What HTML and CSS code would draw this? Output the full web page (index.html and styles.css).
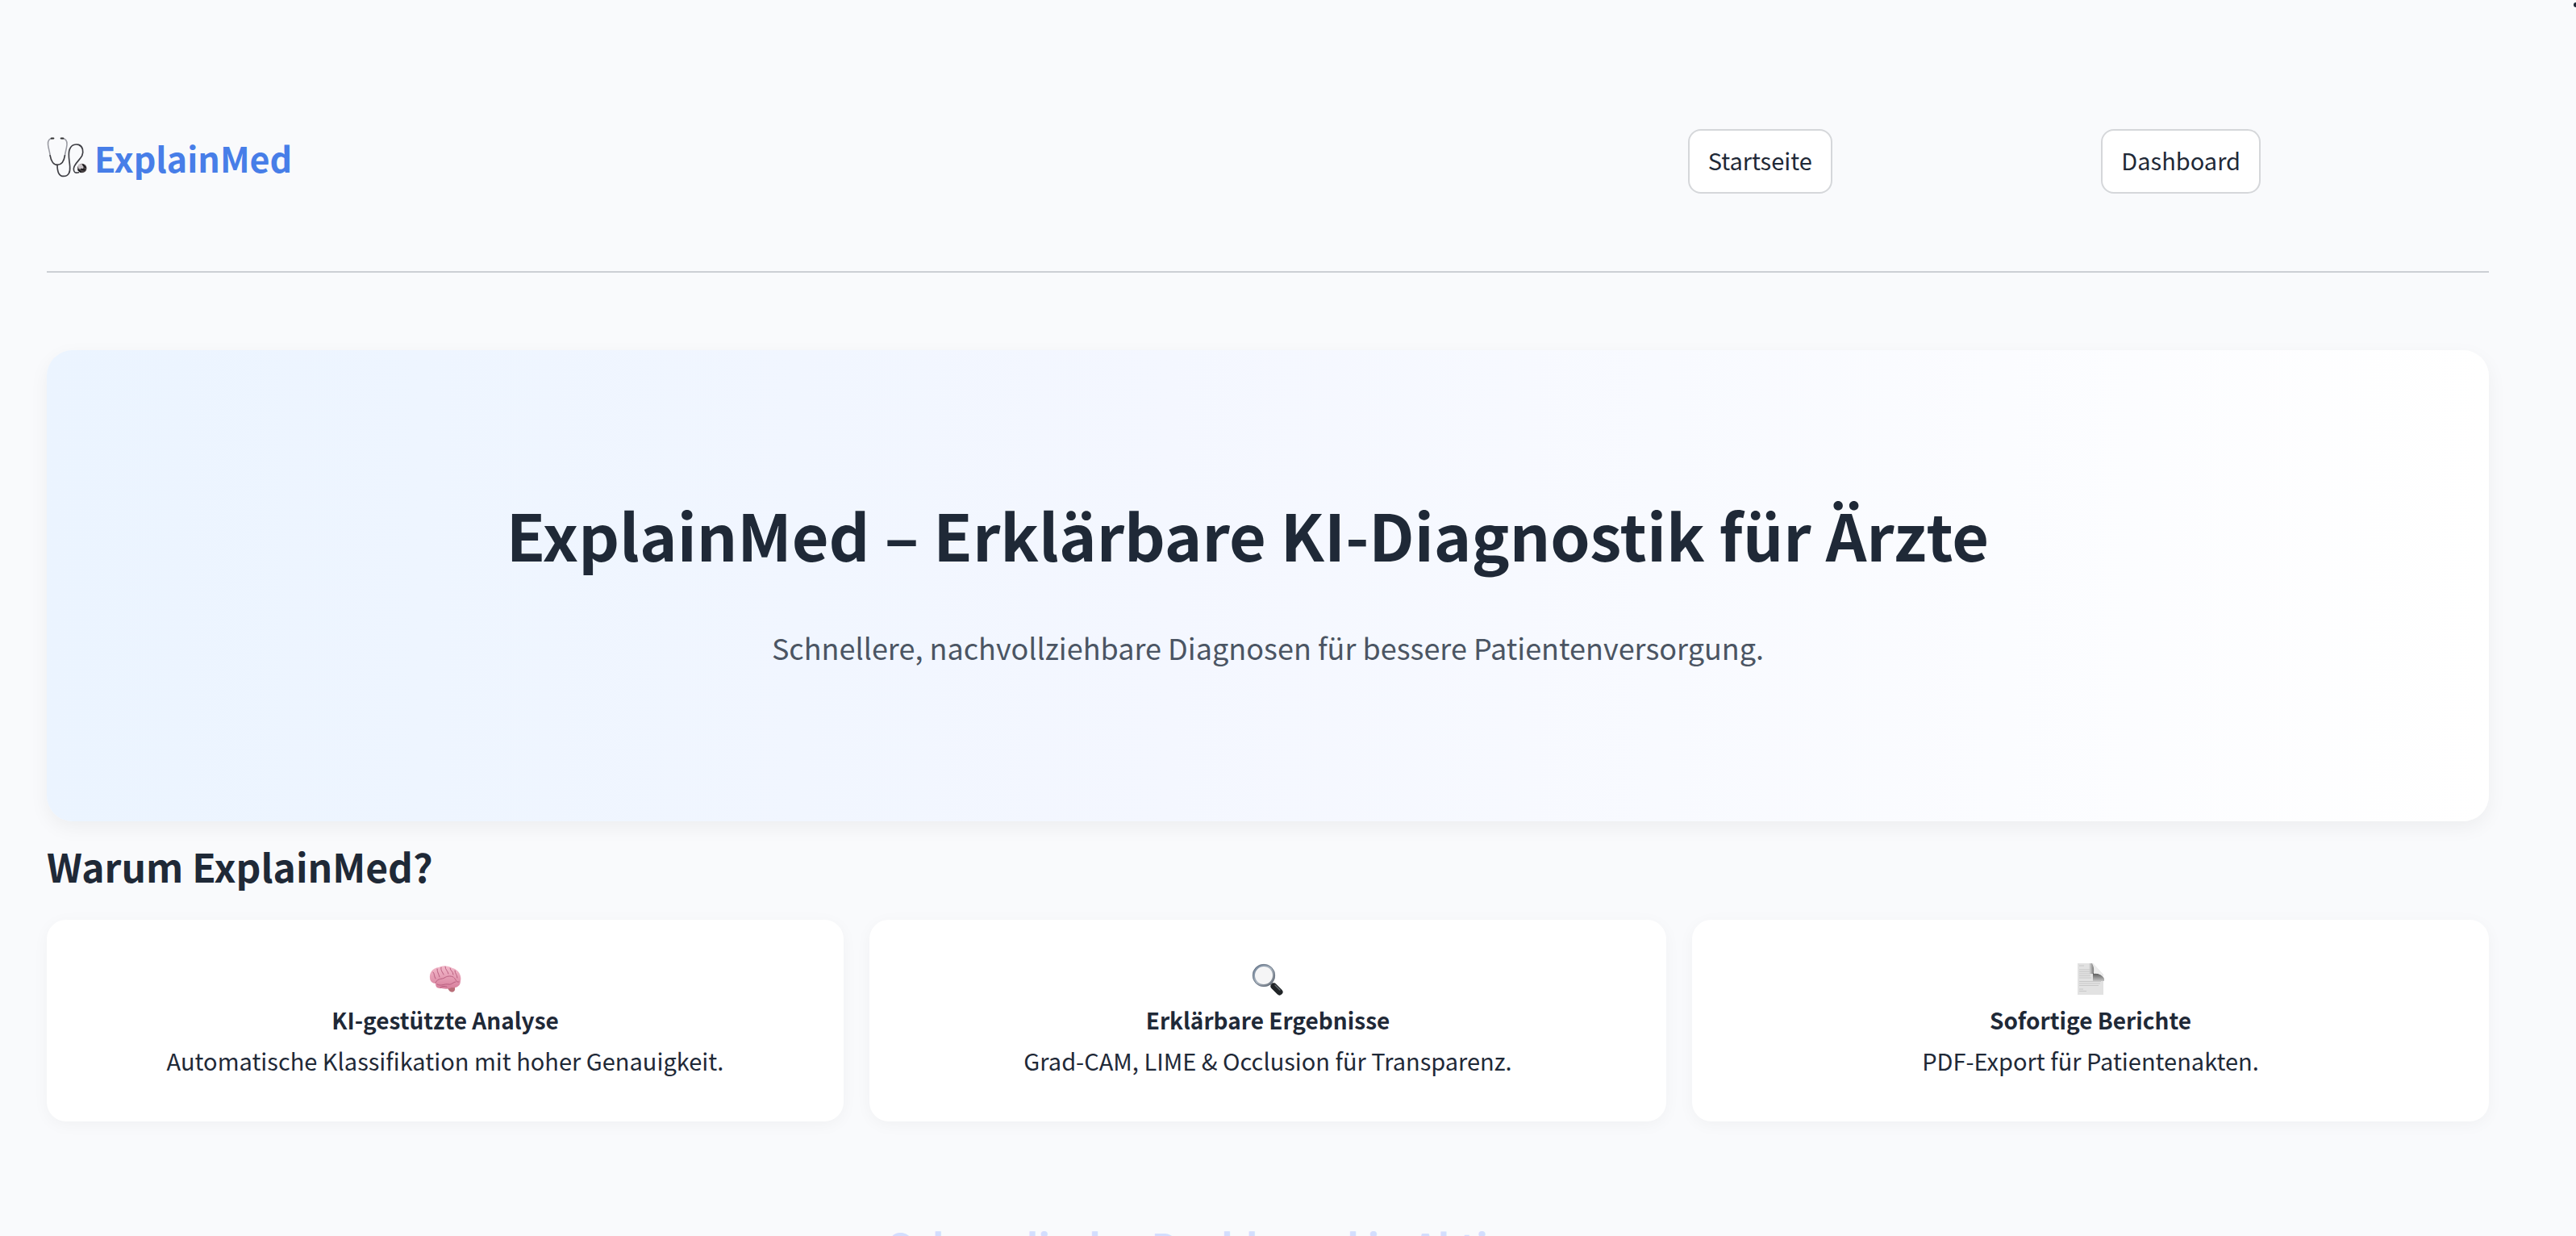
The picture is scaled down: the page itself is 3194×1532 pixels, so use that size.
FILE: index.html
```html
<!DOCTYPE html>
<html lang="de">
<head>
<meta charset="utf-8">
<title>ExplainMed</title>
<meta name="viewport" content="width=device-width, initial-scale=1">
<link rel="stylesheet" href="styles.css">
</head>
<body>
<div class="app">
  <button class="menu" type="button" aria-label="Menü">
    <svg viewBox="0 0 6 30" width="6" height="30"><circle cx="3" cy="3" r="3"/></svg>
  </button>
  <header class="header">
    <div class="brand">
      <svg class="brand-icon" viewBox="0 0 48 48" fill="none" stroke-linecap="round" aria-hidden="true">
        <path d="M7 1.500C3 1.500 1 4 1.500 9C2 14 3.500 17 4 22" stroke="#9a9ba3" stroke-width="1.500"/>
        <path d="M18 1.500C22 1.500 24.500 4 24 9C23.500 14 22 18 21.500 22" stroke="#9a9ba3" stroke-width="1.500"/>
        <path d="M4 22C5 28 8 33 12.500 33S20.500 29 21.500 22" stroke="#3b3b40" stroke-width="1.600"/>
        <path d="M12.500 33C12.500 41 14 46.500 20 46.500C26 46.500 28 42 27.500 35C27 27 25 21 27 15C29 9 34 8 38 9C43 11 44 17 42 22C39 28 32 32 32 38C32 42 34 43 38 42" stroke="#3f3f45" stroke-width="1.600"/>
        <path d="M5.500 1.500H8M17 1.500h2.500" stroke="#333" stroke-width="2"/>
        <circle cx="42" cy="37" r="5.500" fill="#4a4346"/>
        <circle cx="40.500" cy="35" r="3.200" fill="#c9c3c7"/>
        <path d="M37.500 39l3 2.500M43 33l3 3M41 38l4 1" stroke="#17171b" stroke-width="1.500"/>
      </svg>
      <span>ExplainMed</span>
    </div>
    <nav class="nav-item"><button class="nav-button" type="button">Startseite</button></nav>
    <nav class="nav-item"><button class="nav-button" type="button">Dashboard</button></nav>
  </header>
  <hr class="divider">
  <main>
    <section class="hero">
      <h1 class="hero-title">ExplainMed – Erklärbare KI-Diagnostik für Ärzte</h1>
      <p class="hero-text">Schnellere, nachvollziehbare Diagnosen für bessere Patientenversorgung.</p>
    </section>
    <h2 class="section-title">Warum ExplainMed?</h2>
    <section class="cards">
      <article class="card">
        <div class="card-icon">
          <svg viewBox="0 0 40 40" width="40" height="40" aria-hidden="true">
            <defs><linearGradient id="brain" x1="0" y1="0" x2="0" y2="1"><stop offset="0" stop-color="#f3bacb"/><stop offset="1" stop-color="#d77f9c"/></linearGradient></defs>
            <path d="M21 28L25 34C28 37 33 36 32 30L30 26Z" fill="#b96d78"/>
            <path d="M1 18C0 11 6 5 12 5C17 2 25 3 29 6C35 7 41 14 39 22C39 28 34 31 28 30C23 33 17 31 14 31C9 31 8 28 8 25C4 25 1 22 1 18Z" fill="url(#brain)"/>
            <g fill="none" stroke="#b95f80" stroke-width="1" stroke-linecap="round">
              <path d="M5 11c2 2 1 5 3 8M10 7c0 4 2 6 3 10M15 5c-1 4 2 6 3 9M20 4c0 4 3 5 4 9M26 6c0 3 4 4 4 8M32 9c0 4 3 5 3 9"/>
              <path d="M8 24c3-6 8-4 11-6s7-3 11-1M10 26c5 3 9-1 14 0 4 1 6-3 9-3M31 18c3 2 2 6 6 5M14 30c2-2 6-2 8-1"/>
            </g>
          </svg>
        </div>
        <h3 class="card-title">KI-gestützte Analyse</h3>
        <p class="card-text">Automatische Klassifikation mit hoher Genauigkeit.</p>
      </article>
      <article class="card">
        <div class="card-icon">
          <svg viewBox="0 0 40 40" width="40" height="40" aria-hidden="true">
            <defs><linearGradient id="rim" x1="0" y1="0" x2="1" y2="1"><stop offset="0" stop-color="#6f8298"/><stop offset=".5" stop-color="#aab4bf"/><stop offset="1" stop-color="#646c76"/></linearGradient></defs>
            <path d="M24 25l3 3" stroke="#858b93" stroke-width="4"/>
            <circle cx="15" cy="15" r="12.500" fill="#f5f5f6" stroke="url(#rim)" stroke-width="3"/>
            <circle cx="15" cy="15" r="13.700" fill="none" stroke="#5d6978" stroke-width=".700"/>
            <path d="M27.500 28.500L34.500 35.500" stroke="#202427" stroke-width="8" stroke-linecap="round"/>
            <path d="M29 27l6 6" stroke="#626a6f" stroke-width="1.500" stroke-linecap="round"/>
          </svg>
        </div>
        <h3 class="card-title">Erklärbare Ergebnisse</h3>
        <p class="card-text">Grad-CAM, LIME &amp; Occlusion für Transparenz.</p>
      </article>
      <article class="card">
        <div class="card-icon">
          <svg viewBox="0 0 40 40" width="40" height="40" aria-hidden="true">
            <defs><linearGradient id="fold" x1="0" y1="1" x2="0" y2="0"><stop offset="0" stop-color="#c4c4c4"/><stop offset="1" stop-color="#555"/></linearGradient>
            <linearGradient id="side" x1="0" y1="0" x2="1" y2="0"><stop offset="0" stop-color="#e2e2e2"/><stop offset="1" stop-color="#777"/></linearGradient></defs>
            <path d="M4 0H23L36 14V39H4Z" fill="#e2e2e2"/>
            <path d="M18 0H22Q25 5 24 13H18Z" fill="url(#side)"/>
            <path d="M23 12C29 12 34 14 37 19V22H23Z" fill="url(#fold)"/>
            <path d="M22 0C25 2 34 11 37 18C33 13 29 12 24 13C25 7 24 3 22 0Z" fill="#ededed"/>
            <path d="M6 3h6M6 8h13M6 10.500h13M6 13h14M6 15.500h14M6 18h15M6 22.500h27M6 25h26M6 27.500h24M6 32h5M6 34.500h9" stroke="#c8c8c8" stroke-width="1"/>
          </svg>
        </div>
        <h3 class="card-title">Sofortige Berichte</h3>
        <p class="card-text">PDF-Export für Patientenakten.</p>
      </article>
    </section>
    <h2 class="demo-title">Schau dir das Dashboard in Aktion an</h2>
  </main>
</div>
</body>
</html>
```
FILE: styles.css
```css
* { box-sizing: border-box; }

body {
  margin: 0;
  background: #f9fafc;
  color: #1f2937;
  font-family: "Noto Sans CJK SC", "Noto Sans", sans-serif;
  font-size: 29px;
  line-height: 50px;
}

h1, h2, h3, p { margin: 0; }

.app {
  position: relative;
  height: 100vh;
  overflow: hidden;
  padding: 160px 108px 0 58px;
}

.menu {
  position: absolute;
  top: 3px;
  right: -3px;
  padding: 0;
  border: 0;
  background: none;
  line-height: 0;
  fill: #1f2937;
}

.header {
  display: grid;
  grid-template-columns: 25fr 6fr 6fr;
  column-gap: 32px;
  align-items: start;
}

.brand {
  display: flex;
  align-items: center;
  gap: 9px;
  color: #477ee8;
  font-size: 43px;
  font-weight: 700;
  line-height: 70px;
}

.brand-icon { width: 50px; height: 50px; }

.nav-item { display: flex; }

.nav-button {
  height: 80px;
  padding: 0 23px 4px;
  border: 2px solid #d5d7da;
  border-radius: 16px;
  background: #fff;
  color: inherit;
  font: inherit;
}

.divider {
  height: 2px;
  margin: 96px 0;
  border: 0;
  background: #cccfd4;
}

.hero {
  padding: 180px 48px 186px;
  border-radius: 32px;
  background: linear-gradient(90deg, #ebf4ff, #f4f7ff 46%, #fff);
  box-shadow: 0 8px 24px rgba(0, 0, 0, 0.05);
  text-align: center;
}

.hero-title {
  padding-right: 50px;
  font-size: 79px;
  font-weight: 700;
  line-height: 96px;
}

.hero-text {
  margin-top: 62px;
  color: #4b5563;
  font-size: 36px;
  line-height: 60px;
}

.section-title {
  margin: 21px 0 33px;
  font-size: 48px;
  font-weight: 600;
  line-height: 68px;
}

.cards {
  display: grid;
  grid-template-columns: repeat(3, 1fr);
  gap: 32px;
}

.card {
  padding: 49px 32px 51px;
  border-radius: 24px;
  background: #fff;
  box-shadow: 0 4px 20px rgba(0, 0, 0, 0.04);
  text-align: center;
}

.card-icon {
  display: flex;
  align-items: center;
  justify-content: center;
  height: 50px;
}

.card-title {
  font-size: 28px;
  font-weight: 600;
}

.demo-title {
  margin-top: 120px;
  padding-right: 68px;
  color: #d3defe;
  font-size: 48px;
  font-weight: 700;
  line-height: 68px;
  text-align: center;
}
```
